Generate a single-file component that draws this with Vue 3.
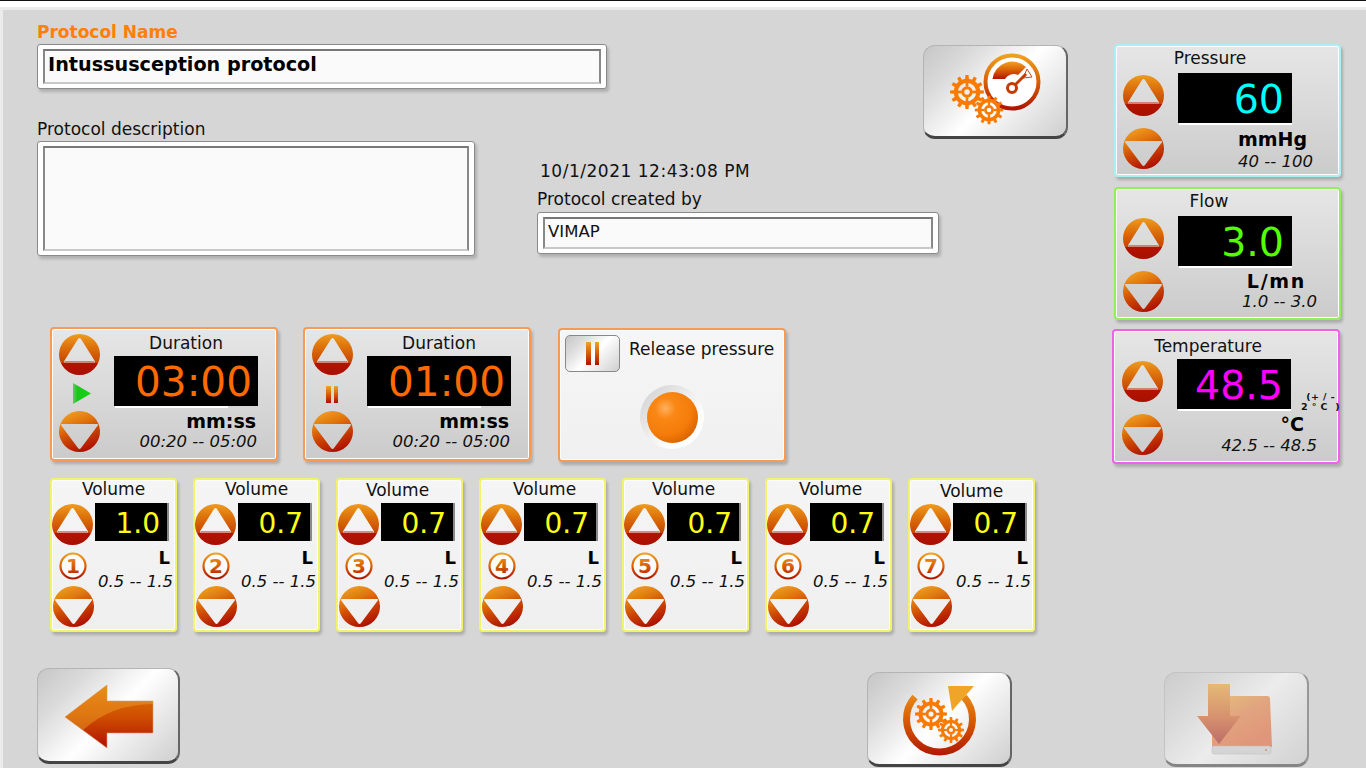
<script setup>
function gearPath(n, rOut, rRoot, rHole) {
  let d = '';
  const step = (Math.PI * 2) / n;
  for (let i = 0; i < n; i++) {
    const a = i * step;
    const pts = [
      [rRoot, a - step * 0.5],
      [rRoot, a - step * 0.27],
      [rOut, a - step * 0.18],
      [rOut, a + step * 0.18],
      [rRoot, a + step * 0.27],
    ];
    for (const [r, t] of pts) {
      d += (d ? 'L' : 'M') + (r * Math.cos(t)).toFixed(2) + ' ' + (r * Math.sin(t)).toFixed(2) + ' ';
    }
  }
  d += 'Z ';
  d += `M${rHole} 0 A${rHole} ${rHole} 0 1 0 ${-rHole} 0 A${rHole} ${rHole} 0 1 0 ${rHole} 0 Z`;
  return d;
}
const gearD = gearPath(12, 50, 39, 27);

const bigCards = [
  { key: 'pressure', title: 'Pressure', value: '60', unit: 'mmHg', range: '40 -- 100' },
  { key: 'flow', title: 'Flow', value: '3.0', unit: 'L/mn', range: '1.0 -- 3.0' },
  { key: 'temp', title: 'Temperature', value: '48.5', unit: '°C', range: '42.5 -- 48.5', note: ['(+ / -', '2 ° C  )'] },
];
const durations = [
  { value: '03:00', state: 'play' },
  { value: '01:00', state: 'pause' },
];
const volumes = [
  { n: 1, value: '1.0', dx: 0, dy: 0 },
  { n: 2, value: '0.7', dx: 0, dy: 0 },
  { n: 3, value: '0.7', dx: -2, dy: 1 },
  { n: 4, value: '0.7', dx: 2, dy: 0 },
  { n: 5, value: '0.7', dx: -2, dy: 0 },
  { n: 6, value: '0.7', dx: 2, dy: 0 },
  { n: 7, value: '0.7', dx: 0, dy: 2 },
];
</script>

<template>
  <div class="page">
    <svg class="defs" width="0" height="0" aria-hidden="true">
      <defs>
        <linearGradient id="gUp" x1="0" y1="0" x2="0" y2="1">
          <stop offset="0" stop-color="#ee9c20" />
          <stop offset="0.3" stop-color="#de740c" />
          <stop offset="0.7" stop-color="#c94400" />
          <stop offset="0.71" stop-color="#b21400" />
          <stop offset="1" stop-color="#a90e00" />
        </linearGradient>
        <linearGradient id="gDown" x1="0.2" y1="0" x2="0.6" y2="1">
          <stop offset="0" stop-color="#f0a224" />
          <stop offset="0.33" stop-color="#e2760c" />
          <stop offset="0.6" stop-color="#cc4602" />
          <stop offset="1" stop-color="#ad0f00" />
        </linearGradient>
        <linearGradient id="gRing" x1="0" y1="0" x2="0" y2="1">
          <stop offset="0" stop-color="#f0a020" />
          <stop offset="0.5" stop-color="#d95f05" />
          <stop offset="1" stop-color="#b01500" />
        </linearGradient>
        <linearGradient id="gArrow" x1="0" y1="0" x2="0" y2="1">
          <stop offset="0" stop-color="#e2780c" />
          <stop offset="0.5" stop-color="#cf4f00" />
          <stop offset="1" stop-color="#b01000" />
        </linearGradient>
        <linearGradient id="gRingUser" gradientUnits="userSpaceOnUse" x1="0" y1="680" x2="0" y2="756">
          <stop offset="0" stop-color="#f0a020" />
          <stop offset="0.5" stop-color="#d95f05" />
          <stop offset="1" stop-color="#b01500" />
        </linearGradient>
        <linearGradient id="gPlay" x1="0" y1="0" x2="1" y2="0">
          <stop offset="0" stop-color="#6fc06f" />
          <stop offset="0.25" stop-color="#18c818" />
          <stop offset="1" stop-color="#14d414" />
        </linearGradient>
        <linearGradient id="gDisk" x1="0" y1="0" x2="0.6" y2="1">
          <stop offset="0" stop-color="#f3ad33" />
          <stop offset="0.5" stop-color="#ea7a3a" />
          <stop offset="1" stop-color="#e8622f" />
        </linearGradient>
        <linearGradient id="gDrop" x1="0" y1="0" x2="0" y2="1">
          <stop offset="0" stop-color="#f0a428" />
          <stop offset="0.55" stop-color="#d85a1a" />
          <stop offset="1" stop-color="#a81810" />
        </linearGradient>
        <symbol id="spinUp" viewBox="0 0 41 41">
          <path fill="url(#gUp)" fill-rule="evenodd" d="M20.5 0A20.5 20.5 0 1 1 20.5 41A20.5 20.5 0 1 1 20.5 0Z M19 5Q20.5 3 22 5L35.5 26.5Q37 29 34.5 29L6.5 29Q4 29 5.5 26.5Z" />
          <path fill="#c9523a" opacity="0.65" d="M5.9 27H35.1Q37 29 34.5 29H6.5Q4 29 5.9 27Z" />
        </symbol>
        <symbol id="spinDown" viewBox="0 0 41 41">
          <path fill="url(#gDown)" fill-rule="evenodd" d="M20.5 0A20.5 20.5 0 1 1 20.5 41A20.5 20.5 0 1 1 20.5 0Z M3 13H38Q39.5 13 38.8 14.5L22 37Q20.5 39 19 37L2.2 14.5Q1.5 13 3 13Z" />
        </symbol>
        <symbol id="gear" viewBox="-50 -50 100 100">
          <path fill-rule="evenodd" :d="gearD" />
          <path fill-rule="evenodd" d="M17 0A17 17 0 1 0 -17 0A17 17 0 1 0 17 0Z M8 0A8 8 0 1 1 -8 0A8 8 0 1 1 8 0Z" />
          <rect x="-4" y="-30" width="8" height="14" />
          <rect x="-4" y="16" width="8" height="14" />
          <rect x="-30" y="-4" width="14" height="8" />
          <rect x="16" y="-4" width="14" height="8" />
        </symbol>
      </defs>
    </svg>

    <div class="blackline"></div>
    <div class="whiteband"></div>

    <div class="panel">
      <div class="upper">
        <div class="left">
          <div class="form">
            <div class="name-block">
              <div class="label name-label">Protocol Name</div>
              <div class="field name-field"><div class="well name-text">Intussusception protocol</div></div>
            </div>

            <div class="desc-block">
              <div class="label">Protocol description</div>
              <div class="field desc-field"><div class="well"></div></div>
            </div>

            <div class="creator-block">
              <div class="label date">10/1/2021 12:43:08 PM</div>
              <div class="label created">Protocol created by</div>
              <div class="field creator-field"><div class="well creator-text">VIMAP</div></div>
            </div>

            <button class="gbtn gauge-btn" type="button" aria-label="Settings">
              <svg viewBox="924 46 142 90" width="142" height="90">
                <circle cx="1012" cy="82" r="26.5" fill="#fff" stroke="url(#gRing)" stroke-width="4" />
                <path fill="url(#gRing)" d="M992.5 79A20 20 0 0 1 1026 67L1018 75A10 10 0 0 0 1005 79Z" />
                <path fill="#fff" stroke="#c84a0a" stroke-width="1" d="M1027 69L1032 77L1023 78Z" />
                <line x1="1012" y1="88" x2="1026" y2="74" stroke="#c53a00" stroke-width="3" />
                <circle cx="1012" cy="88" r="4.5" fill="#fff" stroke="#c53a00" stroke-width="3" />
                <use href="#gear" x="950" y="75" width="34" height="34" fill="#fa7a00" />
                <use href="#gear" x="974.5" y="95.5" width="29" height="29" fill="#fa7a00" />
              </svg>
            </button>
          </div>

          <div class="dur-row">
            <div v-for="d in durations" :key="d.value" class="card orange dur">
              <div class="dur-btns">
                <svg class="spin" viewBox="0 0 41 41"><use href="#spinUp" /></svg>
                <svg v-if="d.state === 'play'" class="play" viewBox="0 0 18 21" width="18" height="21">
                  <path d="M0 0L18 10.5L0 21Z" fill="url(#gPlay)" />
                </svg>
                <div v-else class="mini-pause"><i></i><i></i></div>
                <svg class="spin" viewBox="0 0 41 41"><use href="#spinDown" /></svg>
              </div>
              <div class="dur-main">
                <div class="title">Duration</div>
                <div class="display dur-display">{{ d.value }}</div>
                <div class="underline"></div>
                <div class="unit">mm:ss</div>
                <div class="range">00:20 -- 05:00</div>
              </div>
            </div>

            <div class="card orange release">
              <div class="release-top">
                <button class="gbtn pause-btn" type="button" aria-label="Pause"><i></i><i></i></button>
                <div class="release-label">Release pressure</div>
              </div>
              <div class="led"><div class="led-ball"></div></div>
            </div>
          </div>

          <div class="vol-row">
            <div v-for="v in volumes" :key="v.n" class="card yellow vol">
              <div class="title vol-title" :style="{ transform: `translate(${v.dx}px, ${v.dy}px)` }">Volume</div>
              <div class="vol-body">
                <div class="vol-btns">
                  <svg class="spin vol-up" viewBox="0 0 41 41"><use href="#spinUp" /></svg>
                  <svg class="num" viewBox="0 0 28 28" width="28" height="28">
                    <circle cx="14" cy="14" r="12.5" fill="#fbfbfb" stroke="url(#gRing)" stroke-width="2.2" />
                    <text x="14" y="21" text-anchor="middle" class="num-text" fill="url(#gRing)">{{ v.n }}</text>
                  </svg>
                  <svg class="spin vol-down" viewBox="0 0 41 41"><use href="#spinDown" /></svg>
                </div>
                <div class="vol-main">
                  <div class="display vol-display">{{ v.value }}</div>
                  <div class="unit vol-unit">L</div>
                  <div class="range vol-range">0.5 -- 1.5</div>
                </div>
              </div>
            </div>
          </div>
        </div>

        <div class="right">
          <div v-for="c in bigCards" :key="c.key" class="card big" :class="c.key">
            <div class="title big-title">{{ c.title }}</div>
            <div class="big-body">
              <div class="big-btns">
                <svg class="spin" viewBox="0 0 41 41"><use href="#spinUp" /></svg>
                <svg class="spin" viewBox="0 0 41 41"><use href="#spinDown" /></svg>
              </div>
              <div class="big-main">
                <div class="big-display-row">
                  <div class="big-display-wrap">
                    <div class="display big-display">{{ c.value }}</div>
                    <div class="underline full"></div>
                  </div>
                  <div v-if="c.note" class="note">
                    <span v-for="line in c.note" :key="line">{{ line }}</span>
                  </div>
                </div>
                <div class="unit big-unit">{{ c.unit }}</div>
                <div class="range big-range">{{ c.range }}</div>
              </div>
            </div>
          </div>
        </div>
      </div>

      <div class="bottom">
        <button class="gbtn back-btn" type="button" aria-label="Back">
          <svg viewBox="38 669 140 90" width="140" height="90">
            <path fill="url(#gArrow)" stroke="#d9a070" stroke-width="0.6" d="M65 716L107 684V700H153V732H107V747Z" />
            <path fill="#f0a428" opacity="0.45" d="M65 716L107 684V700H153V703Q112 703 83 729Z" />
          </svg>
        </button>
        <button class="gbtn restart-btn" type="button" aria-label="Restore">
          <svg viewBox="868 673 142 90" width="142" height="90">
            <path fill="none" stroke="url(#gRingUser)" stroke-width="7" d="M915 696A33 33 0 1 0 964 696" />
            <path fill="#f0a428" d="M948 685H974L952 710Z" />
            <use href="#gear" x="915" y="697" width="32" height="32" fill="#fa7a00" />
            <use href="#gear" x="938" y="716" width="26" height="26" fill="#fa7a00" />
          </svg>
        </button>
        <button class="gbtn save-btn" type="button" aria-label="Save" disabled>
          <svg viewBox="1165 673 142 90" width="142" height="90">
            <path fill="url(#gDisk)" d="M1212 695H1267Q1270 695 1270 698L1272 746H1212Z" />
            <rect x="1212" y="745" width="59" height="8" rx="2" fill="#d4d4d4" stroke="#aaa" stroke-width="0.5" />
            <circle cx="1266" cy="749" r="1" fill="#c0603a" />
            <path fill="url(#gDrop)" d="M1208 683H1230V715H1241L1219 743L1197 715H1208Z" />
          </svg>
        </button>
      </div>
    </div>
  </div>
</template>

<style>
html, body { margin: 0; padding: 0; background: #fff; overflow: hidden; }
</style>

<style scoped>
* { box-sizing: border-box; }
.page {
  width: 1366px;
  height: 768px;
  display: flex;
  flex-direction: column;
  overflow: hidden;
  font-family: "DejaVu Sans", Verdana, sans-serif;
  color: #111;
  background: #fff;
}
.defs { display: block; flex: none; }
.blackline { height: 1px; background: #111; flex: none; }
.whiteband { height: 6px; background: #fff; flex: none; }
.panel {
  flex: 1;
  min-height: 0;
  background: #d6d6d6;
  border-left: 3px solid #ececec;
  border-top: 3px solid #ececec;
}
.upper { display: flex; align-items: flex-start; }
.left { width: 1111px; flex: none; padding-left: 34px; }
.right {
  width: 230px;
  flex: none;
  padding-top: 34px;
  display: flex;
  flex-direction: column;
  gap: 10px;
}

.form {
  display: grid;
  grid-template-columns: 500px 386px 145px;
  grid-template-rows: 79px 238px;
}
.label { font-size: 17px; line-height: 20px; white-space: nowrap; }
.name-block { grid-column: 1 / 3; grid-row: 1; padding-top: 12px; }
.name-label { font-weight: 700; color: #ff7f0a; margin-bottom: 2px; }
.field {
  background: #fff;
  border: 1px solid #8a8a8a;
  border-radius: 3px;
  padding: 4px 5px;
  box-shadow: 2px 3px 3px rgba(0, 0, 0, 0.18);
}
.well {
  height: 100%;
  background: #fafafa;
  border-top: 2px solid #777;
  border-left: 2px solid #888;
  border-right: 2px solid #888;
  border-bottom: 2px solid #c8c8c8;
  white-space: nowrap;
}
.name-field { width: 570px; height: 45px; }
.name-text { font-weight: 700; font-size: 19.2px; line-height: 28px; padding-left: 3px; color: #000; }
.desc-block { grid-column: 1; grid-row: 2; padding-top: 30px; }
.desc-field { width: 438px; height: 115px; margin-top: 2px; }
.creator-block { grid-column: 2; grid-row: 2; padding-top: 72px; }
.date { padding-left: 3px; letter-spacing: 0.52px; }
.created { margin-top: 8px; }
.creator-field { width: 402px; height: 42px; margin-top: 3px; }
.creator-text { font-size: 16.5px; line-height: 26px; padding-left: 3px; }

.gbtn {
  display: flex;
  align-items: center;
  justify-content: center;
  padding: 0;
  margin: 0;
  background: linear-gradient(135deg, #c6c6c6 0%, #dadada 22%, #fff 52%, #f4f4f4 62%, #cfcfcf 100%);
  border: 1px solid #b4b4b4;
  border-right: 2px solid #666;
  border-bottom: 3px solid #444;
  border-radius: 12px;
  flex: none;
}
.gbtn svg { display: block; }
.gauge-btn { grid-column: 3; grid-row: 1 / 3; align-self: start; width: 145px; height: 94px; margin-top: 35px; }

.card {
  border: 2px solid #999;
  border-radius: 4px;
  box-shadow: inset 0 0 0 1px #fff, 2px 3px 3px rgba(0, 0, 0, 0.2);
  background: linear-gradient(#e6e6e6, #cbcbcb);
  flex: none;
}
.orange { border-color: #f99a52; }
.yellow { border-color: #f3f36a; background: linear-gradient(#f5f5f5, #efefef); }
.title { font-size: 17px; line-height: 20px; white-space: nowrap; text-align: center; }
.display {
  background: #000;
  text-align: right;
  white-space: nowrap;
}
.underline { height: 2px; width: 113px; background: #fff; margin-left: 1px; }
.underline.full { width: 113px; }
.unit { font-weight: 700; font-size: 19px; line-height: 20px; text-align: right; color: #000; white-space: nowrap; }
.range { font-style: italic; font-size: 16.5px; line-height: 20px; text-align: right; white-space: nowrap; }
.spin { display: block; width: 41px; height: 41px; flex: none; }

.dur-row { display: flex; align-items: flex-start; gap: 25px; padding-left: 13px; }
.dur { width: 228px; height: 134px; display: flex; }
.dur-btns { width: 48px; margin-left: 7px; padding-top: 5px; display: flex; flex-direction: column; }
.play { display: block; margin: 8px 0 7px 14px; flex: none; }
.mini-pause { display: flex; gap: 3px; height: 17px; margin: 11px 0 8px 14px; flex: none; }
.mini-pause i, .pause-btn i { display: block; width: 4.5px; background: linear-gradient(#f0a428, #d85a08 50%, #b01000); }
.dur-main { width: 144px; margin-left: 7px; padding-top: 4px; }
.dur-display { height: 50px; margin-top: 3px; font-size: 40.6px; line-height: 53px; padding-right: 6px; color: #ff6a00; }
.dur-main .unit { margin-top: 3px; padding-right: 2px; }
.dur-main .range { margin-top: 1px; padding-right: 1px; }

.release {
  width: 228px;
  height: 134px;
  margin: 1px 0 0 2px;
  padding: 5px;
  background: linear-gradient(#f6f6f6, #f0f0f0);
}
.release-top { display: flex; align-items: flex-start; gap: 9px; }
.pause-btn { width: 55px; height: 37px; gap: 4px; border-radius: 5px; border-bottom-width: 1px; border-right-width: 1px; border-color: #888; }
.pause-btn i { height: 23px; }
.release-label { font-size: 17px; line-height: 20px; margin-top: 4px; white-space: nowrap; }
.led {
  width: 64px;
  height: 64px;
  margin: 13px auto 0;
  border-radius: 50%;
  background: linear-gradient(135deg, #cfcfcf, #fff 72%);
  display: flex;
  align-items: center;
  justify-content: center;
}
.led-ball {
  width: 51px;
  height: 51px;
  border-radius: 50%;
  background: radial-gradient(circle at 36% 32%, #ffb060 0%, #fa8714 22%, #f57c0a 55%, #d96400 78%, #8a3e10 100%);
}

.vol-row { display: flex; gap: 16px; margin-top: 16px; padding-left: 13px; }
.vol { width: 127px; height: 154px; }
.vol-title { line-height: 18px; height: 18px; width: 123px; }
.vol-body { display: flex; }
.vol-btns { width: 43px; flex: none; }
.vol-up { margin-top: 6px; }
.num { display: block; margin: 7px 0 6px 7px; }
.num-text { font-family: "DejaVu Sans", sans-serif; font-weight: 700; font-size: 20px; }
.vol-down { margin-left: 1px; }
.vol-main { width: 80px; padding-top: 5px; }
.vol-display {
  width: 74px;
  height: 38px;
  font-size: 28px;
  line-height: 42px;
  padding-right: 7px;
  color: #ffff14;
  border-right: 2px solid #8a8a8a;
}
.vol-unit { margin-top: 7px; padding-right: 5px; font-size: 18px; }
.vol-range { margin-top: 4px; padding-right: 2px; }

.big { width: 227px; height: 133px; }
.big-title { text-align: center; }
.big-body { display: flex; }
.big-btns { width: 41px; margin-left: 7px; margin-top: 2px; display: flex; flex-direction: column; gap: 12px; flex: none; }
.big-main { margin-left: 14px; width: 161px; }
.big-display-row { display: flex; align-items: flex-end; }
.big-display-wrap { width: 114px; flex: none; }
.big-display { height: 50px; font-size: 39.5px; line-height: 52px; padding-right: 8px; }
.note {
  width: 34px;
  margin-left: 10px;
  margin-bottom: -1px;
  font-size: 9.5px;
  font-weight: 700;
  line-height: 10px;
  text-align: right;
  letter-spacing: 0.4px;
}
.note span { display: block; white-space: pre; }
.pressure { border-color: #a8f0f4; }
.pressure .big-title { width: 188px; padding-top: 2px; height: 27px; }
.pressure .big-display { color: #00ffff; }
.pressure .big-unit { margin-top: 4px; padding-right: 32px; }
.pressure .big-range { margin-top: 3px; padding-right: 26px; }

.flow { border-color: #8ff05a; }
.flow .big-title { width: 186px; padding-top: 2px; height: 27px; }
.flow .big-display { color: #55ff00; }
.flow .big-unit { margin-top: 3px; padding-right: 33px; letter-spacing: 1.7px; }
.flow .big-range { margin-top: 1px; padding-right: 22px; }

.temp { border-color: #f060e8; height: 135px; width: 228px; margin-left: -2px; margin-top: -1px; }
.temp .big-title { width: 188px; padding-top: 5px; height: 28px; }
.temp .big-btns { margin-left: 8px; }
.temp .big-main { width: 162px; }
.temp .big-display { color: #ff00ff; }
.temp .big-unit { margin-top: 3px; padding-right: 34px; }
.temp .big-range { margin-top: 2px; padding-right: 21px; }

.bottom { display: flex; align-items: flex-start; margin-top: 36px; padding-left: 34px; }
.back-btn { width: 143px; height: 96px; }
.restart-btn { width: 145px; height: 95px; margin: 4px 0 0 687px; }
.save-btn { width: 145px; height: 95px; margin: 4px 0 0 152px; opacity: 0.55; }
</style>
